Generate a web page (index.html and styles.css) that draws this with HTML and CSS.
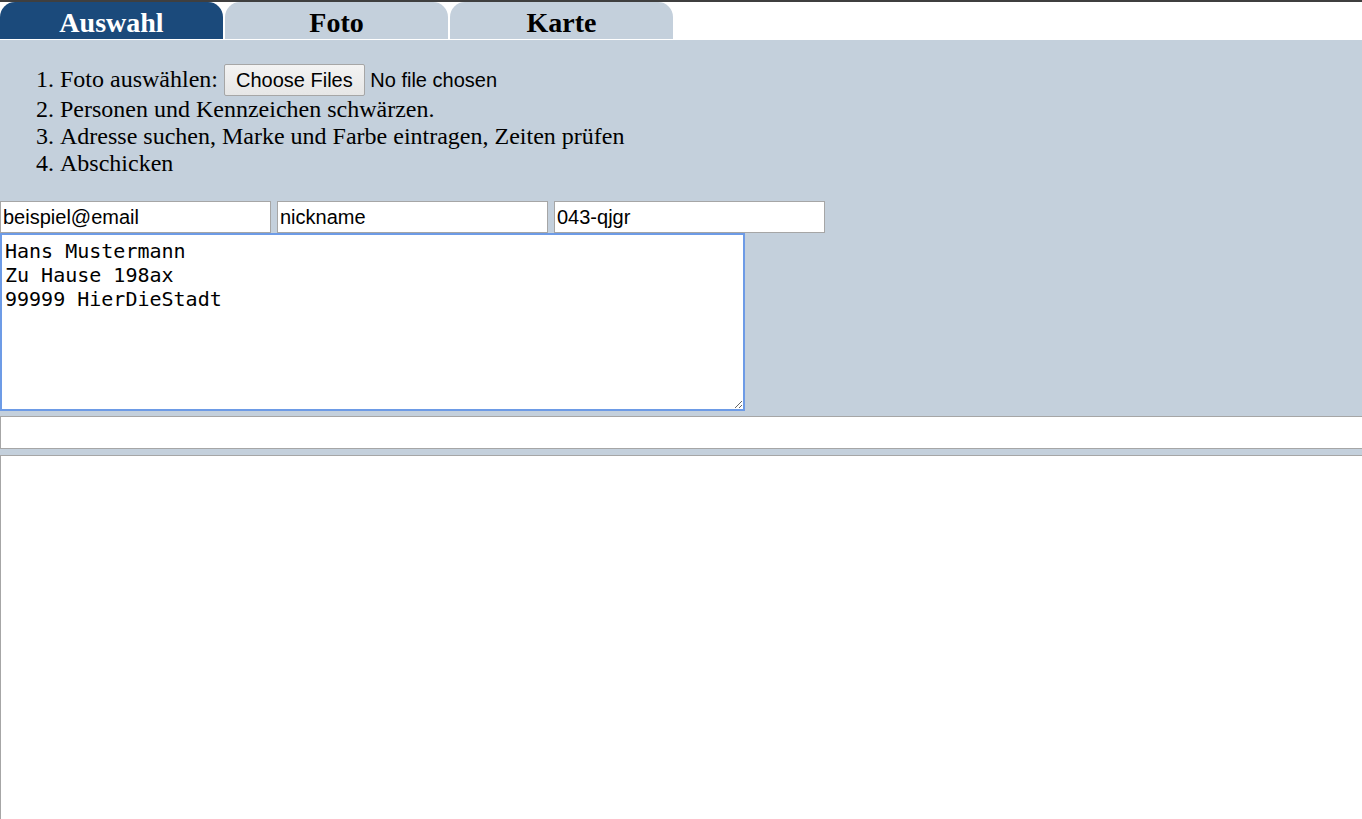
FILE: index.html
```html
<!DOCTYPE html>
<html lang="de">
<head>
<meta charset="utf-8">
<title>Auswahl</title>
<link rel="stylesheet" href="styles.css">
</head>
<body>
<nav class="tabs">
  <div class="tab active">Auswahl</div>
  <div class="tab">Foto</div>
  <div class="tab">Karte</div>
</nav>
<main class="panel">
  <ol class="steps">
    <li>Foto auswählen: <span class="file"><span class="file-btn">Choose Files</span> No file chosen</span></li>
    <li>Personen und Kennzeichen schwärzen.</li>
    <li>Adresse suchen, Marke und Farbe eintragen, Zeiten prüfen</li>
    <li>Abschicken</li>
  </ol>
  <div class="fields">
    <input class="field" type="text" value="beispiel@email">
    <input class="field" type="text" value="nickname">
    <input class="field" type="text" value="043-qjgr">
  </div>
  <textarea class="address">Hans Mustermann
Zu Hause 198ax
99999 HierDieStadt</textarea>
  <input class="wide" type="text">
  <div class="big"></div>
</main>
</body>
</html>
```

FILE: styles.css
```css
html, body {
  margin: 0;
  overflow: hidden;
  background: #ffffff;
}
body {
  border-top: 2px solid #3f3f3f;
  font-family: "Liberation Serif", "Times New Roman", serif;
}
.tabs {
  display: flex;
  gap: 2px;
  margin-bottom: 1px;
}
.tab {
  width: 223px;
  height: 37px;
  border-radius: 15px 15px 0 0;
  background: #c4d0dc;
  color: #000;
  font-weight: bold;
  font-size: 28px;
  line-height: 41px;
  text-align: center;
}
.tab.active {
  background: #1b4a7b;
  color: #ffffff;
}
.panel {
  background: #c4d0dc;
  display: flex;
  flex-direction: column;
  align-items: flex-start;
}
.steps {
  margin: 24px 0 24px 0;
  padding-left: 60px;
  font-size: 24px;
  line-height: 27px;
}
.file {
  font-family: "Liberation Sans", Arial, sans-serif;
  font-size: 20px;
}
.file-btn {
  display: inline-block;
  height: 32px;
  box-sizing: border-box;
  padding: 0 11px;
  line-height: 30px;
  border: 1px solid #a6a6a6;
  border-radius: 2px;
  background: linear-gradient(#f3f3f3, #e6e6e6);
  margin-left: 0;
  vertical-align: 0;
}
.fields {
  display: flex;
  gap: 6px;
}
.field {
  width: 271px;
  height: 32px;
  box-sizing: border-box;
  margin: 0;
  padding: 0 2px;
  border: 1px solid #a6a6a6;
  background: #fff;
  font-family: "Liberation Sans", Arial, sans-serif;
  font-size: 20px;
  color: #000;
}
.address {
  width: 745px;
  height: 178px;
  box-sizing: border-box;
  margin: 0;
  padding: 4px 3px;
  border: 2px solid #6d9be6;
  font-family: "DejaVu Sans Mono", monospace;
  font-size: 20px;
  line-height: 24px;
  color: #000;
  resize: both;
}
.wide {
  width: 1400px;
  height: 33px;
  box-sizing: border-box;
  margin: 5px 0 0 0;
  border: 1px solid #a6a6a6;
  background: #fff;
  font-size: 20px;
}
.big {
  width: 1400px;
  height: 400px;
  margin-top: 6px;
  box-sizing: border-box;
  border: 1px solid #a6a6a6;
  background: #fff;
}
```
